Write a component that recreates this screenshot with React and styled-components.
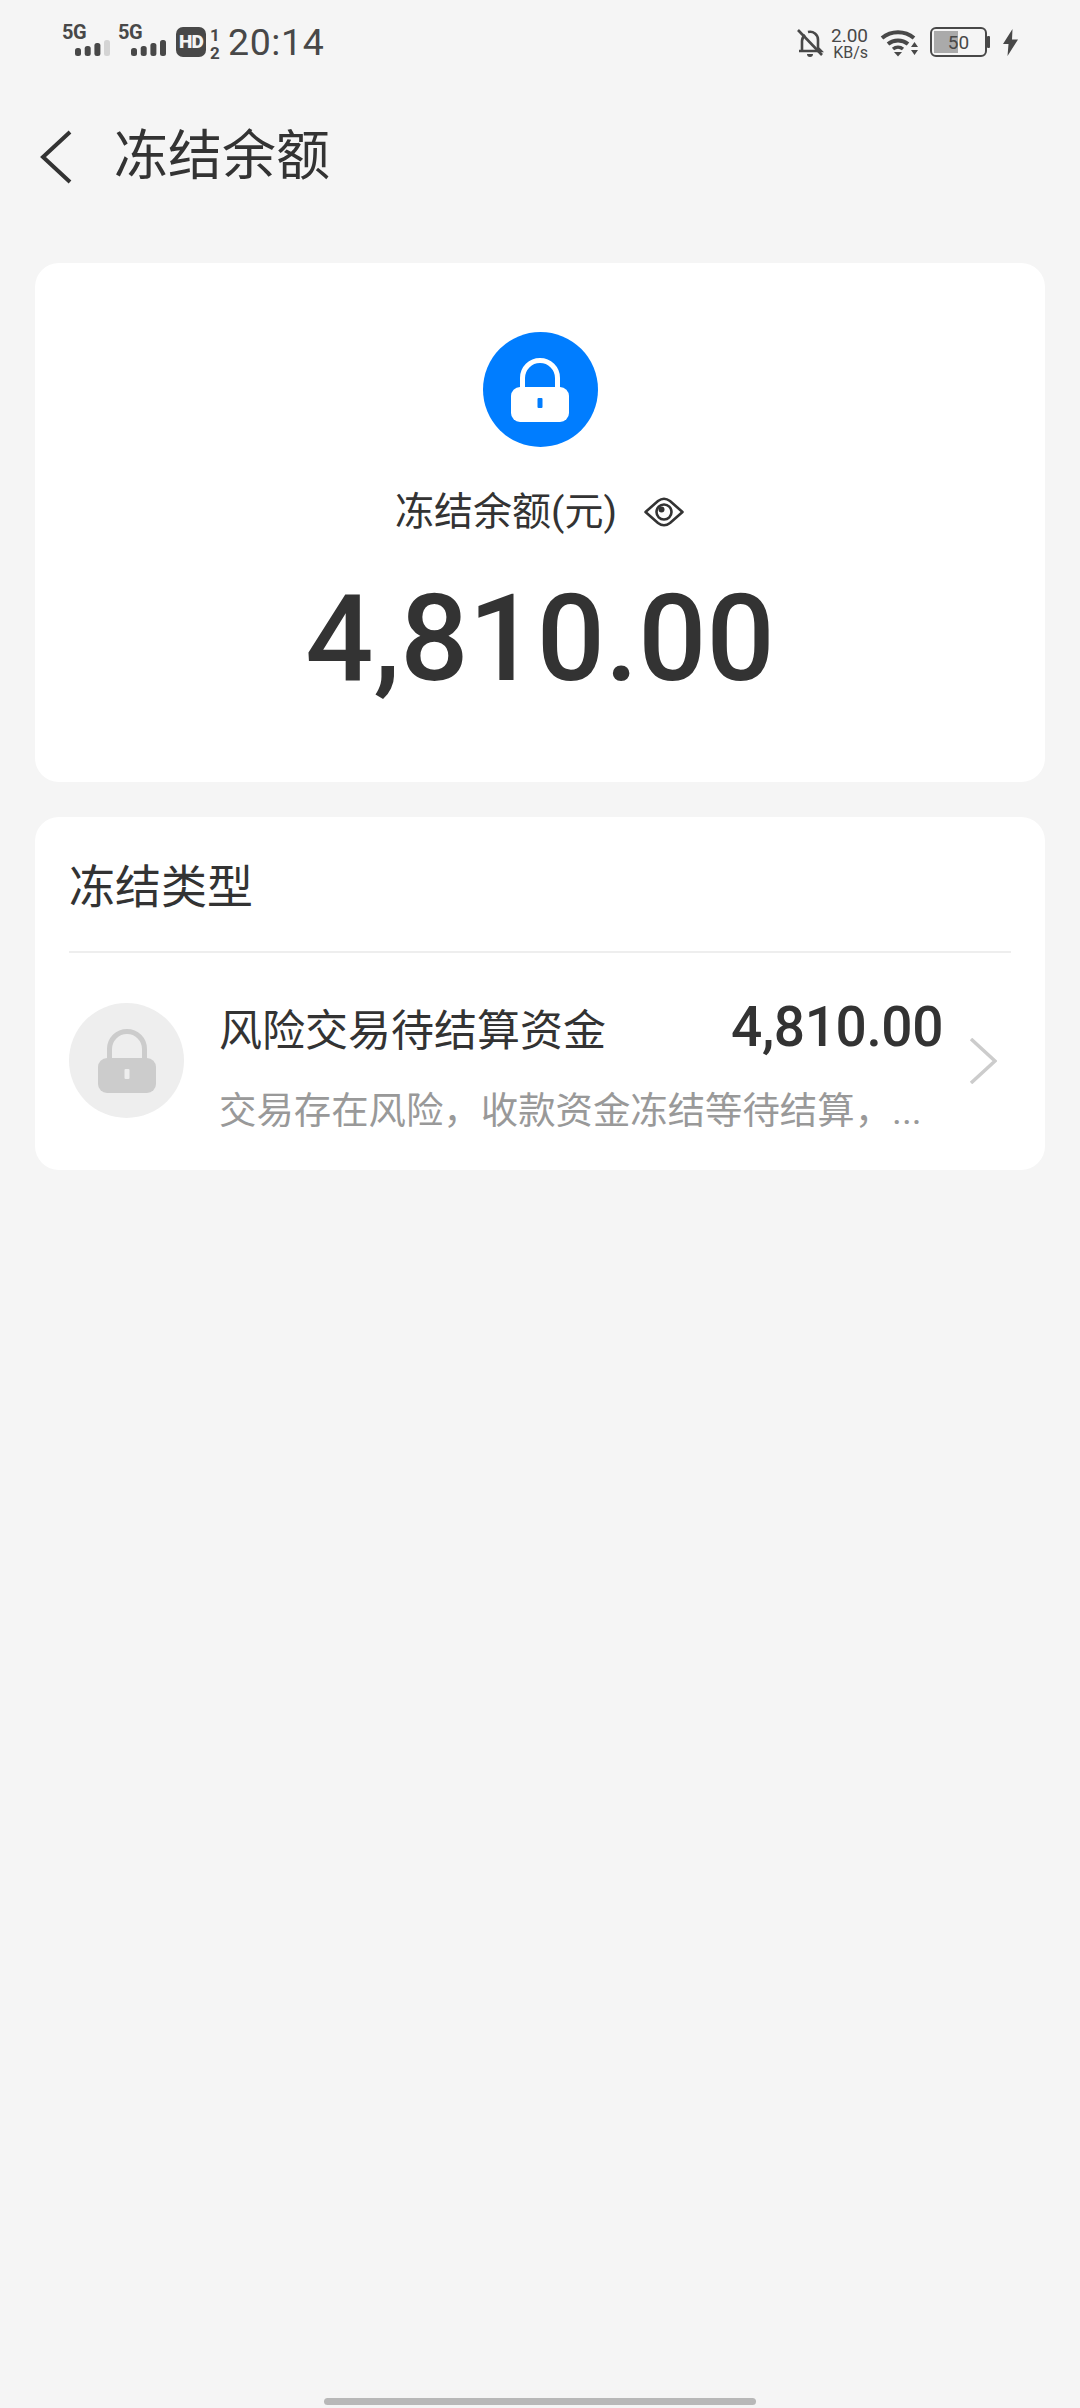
import React from 'react'
import styled, { createGlobalStyle } from 'styled-components'

const GlobalStyle = createGlobalStyle`
  html, body {
    margin: 0;
    padding: 0;
    background: #f5f5f5;
  }
  * {
    box-sizing: border-box;
  }
`

const Page = styled.div`
  width: 1080px;
  height: 2408px;
  display: flex;
  flex-direction: column;
  background: #f5f5f5;
  overflow: hidden;
  color: #333;
  font-family: Roboto, "Noto Sans CJK SC", sans-serif;
`
const StatusBar = styled.div`
  height: 84px;
  padding: 22px 62px 0 63px;
  display: flex;
  justify-content: space-between;
  color: #484848;
`
const StatusGroup = styled.div`
  display: flex;
  align-items: flex-start;
`
const Signal = styled.div`
  width: 47px;
  margin-right: 9px;
  height: 36px;
  position: relative;
`
const SignalLabel = styled.span`
  position: absolute;
  left: -1px;
  top: 2px;
  font-size: 20px;
  line-height: 17px;
  font-weight: 700;
  letter-spacing: -0.5px;
`
const Bars = styled.svg`
  position: absolute;
  right: 0;
  top: 17px;
`
const HdBadge = styled.span`
  width: 30px;
  height: 30px;
  margin: 5px 0 0 1px;
  border-radius: 7px;
  background: #484848;
  color: #f5f5f5;
  font-size: 19px;
  font-weight: 900;
  line-height: 30px;
  text-align: center;
  letter-spacing: -0.8px;
`
const SimSlots = styled.span`
  width: 14px;
  margin: 4px 6px 0 2px;
  display: flex;
  flex-direction: column;
  align-items: center;
  font-size: 17px;
  line-height: 18px;
  font-weight: 700;
`
const Clock = styled.span`
  font-size: 37.5px;
  line-height: 40px;
  font-weight: 400;
  letter-spacing: 0.6px;
`
const Speed = styled.div`
  width: 40px;
  margin: 4px 12px 0 4px;
  display: flex;
  flex-direction: column;
  align-items: flex-end;
`
const SpeedValue = styled.span`
  font-size: 19px;
  line-height: 19px;
`
const SpeedUnit = styled.span`
  font-size: 16px;
  line-height: 16px;
`
const Battery = styled.div`
  width: 57px;
  height: 30px;
  margin: 5px 0 0 10px;
  border: 2.5px solid #484848;
  border-radius: 6px;
  position: relative;
  display: flex;
  align-items: center;
  justify-content: center;
  font-size: 19px;
  &::before {
    content: '';
    position: absolute;
    left: 2px;
    top: 2px;
    bottom: 2px;
    width: 24px;
    background: #aaaaaa;
  }
`
const BatteryLabel = styled.span`
  position: relative;
`
const NavBar = styled.div`
  height: 179px;
  padding: 0 0 33px 40px;
  display: flex;
  align-items: center;
`
const BackIcon = styled.svg`
  margin-right: 42px;
`
const Title = styled.h1`
  margin: 0;
  font-size: 54px;
  font-weight: 400;
  line-height: 72px;
  color: #333;
`
const Card = styled.section`
  margin: 0 35px ${p => p.$gap || 0}px;
  background: #fff;
  border-radius: 24px;
`
const Summary = styled(Card)`
  height: 519px;
  padding-top: 69px;
  display: flex;
  flex-direction: column;
  align-items: center;
`
const LockCircle = styled.div`
  width: ${p => p.$size}px;
  height: ${p => p.$size}px;
  flex: none;
  border-radius: 50%;
  background: ${p => p.$bg};
  display: flex;
  align-items: center;
  justify-content: center;
`
const SummaryLabel = styled.div`
  margin-top: 40px;
  height: 50px;
  display: flex;
  align-items: center;
  font-size: 39px;
  line-height: 50px;
  color: #333;
`
const EyeIcon = styled.svg`
  margin-left: 26px;
`
const BigAmount = styled.div`
  margin-top: 31px;
  font-size: 120px;
  line-height: 142px;
  font-weight: 500;
  color: #333;
`
const SectionTitle = styled.h2`
  margin: 0 34px;
  height: 136px;
  padding-bottom: 3px;
  display: flex;
  align-items: center;
  font-size: 46px;
  font-weight: 400;
  color: #333;
  border-bottom: 2px solid #eeeeee;
`
const TypeRow = styled.div`
  height: 217px;
  padding: 0 34px 2px;
  display: flex;
  align-items: center;
`
const TypeBody = styled.div`
  width: 724px;
  margin-left: 35px;
  padding-top: 9px;
  display: flex;
  flex-direction: column;
`
const TypeTop = styled.div`
  display: flex;
  justify-content: space-between;
  align-items: center;
  height: 64px;
`
const TypeName = styled.span`
  font-size: 43px;
  color: #333;
`
const TypeAmount = styled.span`
  font-size: 55px;
  font-weight: 500;
  letter-spacing: -0.4px;
  color: #333;
`
const TypeDesc = styled.div`
  margin-top: 27px;
  font-size: 37.4px;
  line-height: 50px;
  color: #999;
  white-space: nowrap;
`
const Chevron = styled.svg`
  margin-left: 26px;
`
const HomeBar = styled.div`
  width: 432px;
  height: 7px;
  margin: auto auto 3px;
  background: #b8b8b8;
  border-radius: 4px;
`

const SignalBars = ({ last }) => (
  <Bars width="35" height="19" viewBox="0 0 35 19">
    <rect x="0" y="9" width="6" height="8" rx="2.5" fill="#484848" />
    <rect x="9.700" y="7" width="6" height="10" rx="2.5" fill="#484848" />
    <rect x="19.400" y="4" width="6" height="13" rx="2.5" fill="#484848" />
    <rect x="29" y="1" width="6" height="16" rx="2.5" fill={last} />
  </Bars>
)

const LockGlyph = ({ body, shackle, hole }) => (
  <svg width="58" height="64" viewBox="0 0 58 64">
    <path d="M11.500 32V20a17.500 17.500 0 0 1 35 0v12" fill="none" stroke={shackle} strokeWidth="5" />
    <rect x="0" y="29" width="58" height="35" rx="9" fill={body} />
    <rect x="26.500" y="40" width="5" height="10" rx="1" fill={hole} />
  </svg>
)

export default function App() {
  return (
    <Page>
      <GlobalStyle />
      <StatusBar>
        <StatusGroup>
          <Signal>
            <SignalLabel>5G</SignalLabel>
            <SignalBars last="#d4d4d4" />
          </Signal>
          <Signal>
            <SignalLabel>5G</SignalLabel>
            <SignalBars last="#484848" />
          </Signal>
          <HdBadge>HD</HdBadge>
          <SimSlots>
            <span>1</span>
            <span>2</span>
          </SimSlots>
          <Clock>20:14</Clock>
        </StatusGroup>
        <StatusGroup>
          <svg width="28" height="32" viewBox="0 0 28 32" style={{ marginTop: 5 }}>
            <path d="M6 23V14a8 8 0 0 1 3-6M12 5a8 8 0 0 1 10 8v8l3 3H3" fill="none" stroke="#484848" strokeWidth="2.6" />
            <path d="M2 3l24 25" stroke="#484848" strokeWidth="2.6" />
            <path d="M11 27h6a3 3 0 0 1-6 0z" fill="#484848" />
          </svg>
          <Speed>
            <SpeedValue>2.00</SpeedValue>
            <SpeedUnit>KB/s</SpeedUnit>
          </Speed>
          <svg width="40" height="30" viewBox="0 0 40 30" style={{ marginTop: 6 }}>
            <path d="M2 10a25 25 0 0 1 32 0" fill="none" stroke="#484848" strokeWidth="4" />
            <path d="M8 16a16 16 0 0 1 20 0" fill="none" stroke="#484848" strokeWidth="4" />
            <path d="M13 21a8 8 0 0 1 10 0" fill="none" stroke="#484848" strokeWidth="3.5" />
            <path d="M14 24h8l-4 4.5z" fill="#484848" />
            <path d="M31 19h7l-3.500-5zM31 22h7l-3.500 5z" fill="#484848" />
          </svg>
          <Battery>
            <BatteryLabel>50</BatteryLabel>
          </Battery>
          <svg width="3" height="12" viewBox="0 0 3 12" style={{ marginTop: 14 }}>
            <rect width="3" height="12" rx="1" fill="#484848" />
          </svg>
          <svg width="15" height="27" viewBox="0 0 15 27" style={{ marginLeft: 13, marginTop: 7 }}>
            <path d="M9.500 0L0 15h5.500L4.500 27 15 10.500H9z" fill="#484848" />
          </svg>
        </StatusGroup>
      </StatusBar>

      <NavBar>
        <BackIcon width="32" height="54" viewBox="0 0 32 54">
          <path d="M30 2L3 27l27 25" fill="none" stroke="#333" strokeWidth="4" />
        </BackIcon>
        <Title>冻结余额</Title>
      </NavBar>

      <Summary $gap={35}>
        <LockCircle $size={115} $bg="#007dff">
          <LockGlyph body="#fff" shackle="#fff" hole="#007dff" />
        </LockCircle>
        <SummaryLabel>
          冻结余额(元)
          <EyeIcon width="42" height="32" viewBox="0 0 42 32">
            <path d="M2.500 16L15 5Q21 0.500 27 5L39.500 16 27 27Q21 31.500 15 27z" fill="none" stroke="#333" strokeWidth="2.6" strokeLinejoin="round" />
            <circle cx="21" cy="16" r="7.500" fill="none" stroke="#333" strokeWidth="2.6" />
            <circle cx="18.500" cy="13.500" r="3" fill="#333" />
          </EyeIcon>
        </SummaryLabel>
        <BigAmount>4,810.00</BigAmount>
      </Summary>

      <Card>
        <SectionTitle>冻结类型</SectionTitle>
        <TypeRow>
          <LockCircle $size={115} $bg="#eeeeee">
            <LockGlyph body="#cccccc" shackle="#cccccc" hole="#eeeeee" />
          </LockCircle>
          <TypeBody>
            <TypeTop>
              <TypeName>风险交易待结算资金</TypeName>
              <TypeAmount>4,810.00</TypeAmount>
            </TypeTop>
            <TypeDesc>交易存在风险，收款资金冻结等待结算，...</TypeDesc>
          </TypeBody>
          <Chevron width="28" height="46" viewBox="0 0 28 46">
            <path d="M2 1l24 22L2 45" fill="none" stroke="#cccccc" strokeWidth="3.500" />
          </Chevron>
        </TypeRow>
      </Card>

      <HomeBar />
    </Page>
  )
}
